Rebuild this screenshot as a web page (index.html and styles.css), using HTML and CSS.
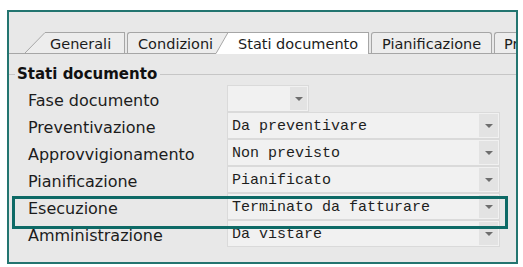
FILE: index.html
```html
<!DOCTYPE html>
<html lang="it">
<head>
<meta charset="utf-8">
<title>Stati documento</title>
<link rel="stylesheet" href="styles.css">
</head>
<body>
<div class="frame">
  <div class="tabstrip">
    <div class="strip-lead"></div>
    <svg class="slant1" width="20" height="21" viewBox="0 0 20 21">
      <polygon points="0,21 20,0 20,21" fill="#ededed"/>
      <line x1="0" y1="21" x2="20" y2="0.5" stroke="#a6a6a6" stroke-width="1"/>
    </svg>
    <div class="tab tab-first">Generali</div>
    <div class="tab tab-cond">Condizioni</div>
    <svg class="slant2" width="12" height="22" viewBox="0 0 12 22">
      <polygon points="0,0 12,0 0,21" fill="#ededed"/>
      <polygon points="12,0 12,22 0,22 0,21" fill="#ffffff"/>
      <line x1="0" y1="0.5" x2="12" y2="0.5" stroke="#a6a6a6" stroke-width="1"/>
      <line x1="0" y1="21.5" x2="12" y2="0.5" stroke="#a6a6a6" stroke-width="1"/>
    </svg>
    <div class="tab tab-active">Stati documento</div>
    <div class="tab tab-pian">Pianificazione</div>
    <div class="tab tab-pr">Prezzi</div>
  </div>

  <div class="group-head">
    <span class="gline gline-left"></span>
    <span class="group-title">Stati documento</span>
    <span class="gline gline-right"></span>
  </div>

  <div class="rows">
    <div class="label">Fase documento</div>
    <div class="combo combo-small"><span class="val"></span><span class="btn"><i class="tri"></i></span></div>

    <div class="label">Preventivazione</div>
    <div class="combo"><span class="val">Da preventivare</span><span class="btn"><i class="tri"></i></span></div>

    <div class="label">Approvvigionamento</div>
    <div class="combo"><span class="val">Non previsto</span><span class="btn"><i class="tri"></i></span></div>

    <div class="label">Pianificazione</div>
    <div class="combo"><span class="val">Pianificato</span><span class="btn"><i class="tri"></i></span></div>

    <div class="label">Esecuzione</div>
    <div class="combo"><span class="val">Terminato da fatturare</span><span class="btn"><i class="tri"></i></span></div>

    <div class="label">Amministrazione</div>
    <div class="combo"><span class="val">Da vistare</span><span class="btn"><i class="tri"></i></span></div>
  </div>

  <div class="highlight"></div>
</div>
</body>
</html>
```

FILE: styles.css
```css
html, body {
  margin: 0;
  padding: 0;
  background: #ffffff;
}

body {
  font-family: "DejaVu Sans", Verdana, sans-serif;
  color: #1c1c1c;
}

.frame {
  position: relative;
  box-sizing: border-box;
  margin: 10px 0 0 7px;
  width: 511px;
  height: 254px;
  border: 2px solid #237570;
  background: #e8e8e8;
  overflow: hidden;
}

/* ---------- tab strip ---------- */
.tabstrip {
  display: flex;
  align-items: flex-end;
  padding-top: 20px;
  border-bottom: 1px solid #a6a6a6;
  white-space: nowrap;
}

.strip-lead {
  width: 16px;
  height: 21px;
  flex: none;
}

.slant1, .slant2 {
  display: block;
  flex: none;
}

.slant2 {
  margin-bottom: -1px;
}

.tab {
  flex: none;
  box-sizing: border-box;
  height: 21px;
  font-size: 14.5px;
  line-height: 20px;
  padding-top: 1px;
  background: #ededed;
  border-top: 1px solid #a6a6a6;
  color: #1c1c1c;
  overflow: hidden;
}

.tab-first {
  width: 80px;
  padding-left: 5px;
  border-right: 1px solid #a6a6a6;
}

.tab-cond {
  width: 89px;
  margin-left: 2px;
  padding-left: 10px;
  border-left: 1px solid #a6a6a6;
  border-top-left-radius: 3px;
}

.tab-active {
  width: 141px;
  height: 22px;
  margin-bottom: -1px;
  padding-left: 10px;
  background: #ffffff;
  border-right: 1px solid #a6a6a6;
}

.tab-pian {
  width: 121px;
  margin-left: 2px;
  padding-left: 10px;
  border-left: 1px solid #a6a6a6;
  border-right: 1px solid #a6a6a6;
  border-radius: 3px 3px 0 0;
}

.tab-pr {
  width: 60px;
  margin-left: 2px;
  padding-left: 9px;
  border-left: 1px solid #a6a6a6;
  border-radius: 3px 3px 0 0;
}

/* ---------- group box header ---------- */
.group-head {
  display: flex;
  align-items: center;
  margin-top: 10px;
  height: 20px;
}

.gline {
  height: 1px;
  background: #c6c6c6;
}

.gline-left {
  width: 6px;
  margin-right: 2px;
}

.gline-right {
  flex: 1;
  margin-left: 3px;
}

.group-title {
  font-weight: bold;
  font-size: 15px;
  line-height: 20px;
  color: #111111;
}

/* ---------- rows ---------- */
.rows {
  display: grid;
  grid-template-columns: 199px auto;
  grid-auto-rows: 27px;
  justify-items: start;
  margin-top: 1px;
  padding-left: 19px;
}

.label {
  font-size: 16px;
  line-height: 25px;
  padding-top: 3px;
  color: #1c1c1c;
}

.combo {
  box-sizing: border-box;
  display: flex;
  align-items: stretch;
  width: 273px;
  height: 27px;
  border: 1px solid #dadada;
  background: #f1f1f1;
}

.combo-small {
  width: 82px;
}

.val {
  flex: 1;
  padding-left: 4px;
  font-family: "Liberation Mono", "Courier New", monospace;
  font-size: 15px;
  line-height: 24px;
  padding-top: 2px;
  color: #1e1e1e;
  white-space: pre;
}

.btn {
  display: flex;
  align-items: center;
  justify-content: center;
  width: 19px;
  margin: 1px 1px 1px 0;
  background: #e3e3e3;
}

.combo-small .btn {
  width: 17px;
}

.tri {
  display: block;
  width: 0;
  height: 0;
  border-left: 4px solid transparent;
  border-right: 4px solid transparent;
  border-top: 4px solid #6e6e6e;
}

/* ---------- annotation overlay ---------- */
.highlight {
  position: absolute;
  left: 3px;
  top: 184px;
  box-sizing: border-box;
  width: 496px;
  height: 33px;
  border: 3px solid #0d6a66;
  pointer-events: none;
}
```
